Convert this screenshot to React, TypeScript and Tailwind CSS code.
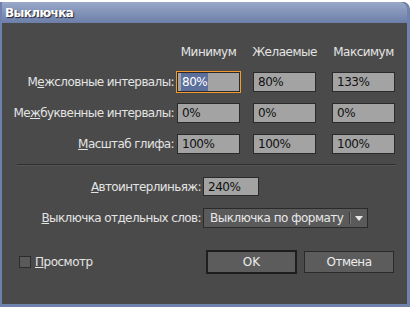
const font = { fontFamily: '"DejaVu Sans", Verdana, sans-serif' }

function Field({ value, w = "w-[63px]", h = "h-[20px]" }: { value: string; w?: string; h?: string }) {
  return (
    <div className={`${w} ${h} bg-[#a3a3a3] border border-[#2a2a2a] flex items-center pl-[4px] text-[12px] tracking-[-0.5px] text-[#111]`}>
      {value}
    </div>
  )
}

function Label({ children, w = "w-[173px]" }: { children: React.ReactNode; w?: string }) {
  return (
    <div className={`${w} text-right text-[12px] tracking-[-0.6px] text-[#e4e4e4] pr-[1px] whitespace-nowrap`}>
      {children}
    </div>
  )
}

function App() {
  return (
    <div className="w-[413px] h-[309px] bg-white pt-[2px]" style={font}>
      <div className="w-[410px] h-[305px] bg-[#4a4a4a] border-l-[2px] border-r-[3px] border-b-[3px] border-[#6f82ad] rounded-tr-[7px] flex flex-col">
        <div className="h-[21px] rounded-tr-[6px] bg-gradient-to-b from-[#9aa8c8] to-[#6c7fa9] flex items-center pl-[3px]">
          <span className="text-white font-bold text-[12px] tracking-[-0.6px] [text-shadow:1px_1px_1px_#223]">Выключка</span>
        </div>

        <div className="flex flex-col">
          <div className="flex mt-[21px] text-[12px] tracking-[-0.5px] text-[#e4e4e4] leading-[16px] whitespace-nowrap">
            <div className="w-[173px]" />
            <div className="ml-[2px] w-[63px] flex justify-center">Минимум</div>
            <div className="ml-[13px] w-[63px] flex justify-center">Желаемые</div>
            <div className="ml-[16px] w-[63px] flex justify-center">Максимум</div>
          </div>

          <div className="flex items-center mt-[12px]">
            <Label>
              М<span className="underline">е</span>жсловные интервалы:
            </Label>
            <div className="ml-[2px] outline outline-1 outline-[#f29a2e] border border-[#2a2a2a] w-[63px] h-[20px] bg-[#a3a3a3] flex items-center pl-[3px] text-[12px] tracking-[-0.5px]">
              <span className="bg-[#5d6f9c] text-white px-[1px]">80%</span>
            </div>
            <div className="ml-[13px]">
              <Field value="80%" />
            </div>
            <div className="ml-[16px]">
              <Field value="133%" />
            </div>
          </div>

          <div className="flex items-center mt-[11px]">
            <Label>
              Ме<span className="underline">ж</span>буквенные интервалы:
            </Label>
            <div className="ml-[2px]">
              <Field value="0%" />
            </div>
            <div className="ml-[13px]">
              <Field value="0%" />
            </div>
            <div className="ml-[16px]">
              <Field value="0%" />
            </div>
          </div>

          <div className="flex items-center mt-[11px]">
            <Label>
              <span className="underline">М</span>асштаб глифа:
            </Label>
            <div className="ml-[2px]">
              <Field value="100%" />
            </div>
            <div className="ml-[13px]">
              <Field value="100%" />
            </div>
            <div className="ml-[16px]">
              <Field value="100%" />
            </div>
          </div>

          <div className="mt-[10px] ml-[15px] w-[379px] border-t border-[#2f2f2f] border-b border-b-[#555]" />

          <div className="flex items-center mt-[11px]">
            <Label w="w-[200px]">
              <span className="underline">А</span>втоинтерлиньяж:
            </Label>
            <div className="ml-[1px]">
              <Field value="240%" w="w-[56px]" h="h-[19px]" />
            </div>
          </div>

          <div className="flex items-center mt-[12px]">
            <Label w="w-[200px]">
              <span className="underline">В</span>ыключка отдельных слов:
            </Label>
            <div className="ml-[1px] w-[165px] h-[20px] bg-[#5a5a5a] border border-[#2a2a2a] flex items-center text-[12px] tracking-[-0.5px] text-[#e8e8e8] whitespace-nowrap">
              <span className="pl-[6px] flex-1">Выключка по формату</span>
              <div className="w-[2px] h-[12px] border-l border-[#3a3a3a] border-r border-r-[#777]" />
              <div className="w-[16px] flex justify-center">
                <svg width="8" height="5" viewBox="0 0 8 5">
                  <path d="M0 0h8L4 5z" fill="#e8e8e8" />
                </svg>
              </div>
            </div>
          </div>

          <div className="flex items-center mt-[22px] pr-[13px]">
            <div className="ml-[17px] w-[12px] h-[12px] bg-[#5a5a5a] border border-[#2c2c2c]" />
            <span className="ml-[4px] flex-1 text-[12px] tracking-[-0.5px] text-[#e4e4e4]">
              <span className="underline">П</span>росмотр
            </span>
            <div className="w-[91px] h-[24px] border-[2px] border-[#1e1e1e] bg-[#5c5c5c] flex items-center justify-center text-[12px] text-[#ececec]">
              OK
            </div>
            <div className="ml-[7px] w-[90px] h-[22px] border border-[#2a2a2a] bg-[#5c5c5c] flex items-center justify-center text-[12px] tracking-[-0.5px] text-[#ececec]">
              Отмена
            </div>
          </div>
        </div>
      </div>
    </div>
  )
}

export default App
